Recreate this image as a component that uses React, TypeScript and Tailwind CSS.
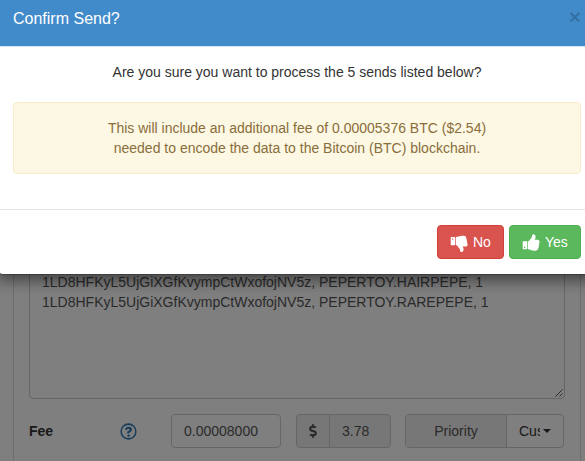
import React, { useState } from "react";
import { FaDollarSign } from "react-icons/fa";

const sends = [
  "1LD8HFKyL5UjGiXGfKvympCtWxofojNV5z, PEPERTOY.HAIRPEPE, 1",
  "1LD8HFKyL5UjGiXGfKvympCtWxofojNV5z, PEPERTOY.RAREPEPE, 1",
];

export default function App() {
  const [open, setOpen] = useState(true);

  return (
    <div className="relative h-[461px] w-[585px] overflow-hidden bg-white font-['Liberation_Sans',sans-serif] text-sm leading-5 text-[#333]">
      <SendForm />
      {open && <ConfirmModal onClose={() => setOpen(false)} />}
    </div>
  );
}

function SendForm() {
  const [fee, setFee] = useState("0.00008000");

  return (
    <div className="ml-[13px] flex h-[461px] w-[568px] flex-col border-x border-[#ddd] px-[15px]">
      <div className="mt-[200px] flex h-[199px] w-[536px] shrink-0 flex-col rounded border border-[#ccc] px-3 pt-[71px] text-[#555]">
        {sends.map((send) => (
          <div key={send} className="whitespace-nowrap">
            {send}
          </div>
        ))}
        <svg
          className="mt-auto -mr-3 self-end"
          width="9"
          height="9"
          viewBox="0 0 9 9"
          stroke="#555"
          fill="none"
        >
          <path d="M0.5 7.5L7.5 0.5M4.5 7.5L7.5 4.5" />
        </svg>
      </div>
      <div className="mt-[15px] flex h-[34px] w-[536px] items-center">
        <label className="w-[90px] font-bold">Fee</label>
        <div className="w-[52px]">
          <HelpIcon />
        </div>
        <input
          type="text"
          value={fee}
          onChange={(e) => setFee(e.target.value)}
          className="h-[34px] w-[110px] rounded border border-[#ccc] px-3 text-[#555] outline-none"
        />
        <div className="ml-[15px] flex h-[34px] w-[95px] overflow-hidden rounded border border-[#ccc] bg-[#eee]">
          <span className="flex w-[33px] items-center justify-center border-r border-[#ccc] text-[#555]">
            <FaDollarSign className="size-[14px]" />
          </span>
          <span className="px-3 leading-8 text-[#555]">3.78</span>
        </div>
        <div className="ml-[14px] flex h-[34px] w-[159px] overflow-hidden rounded border border-[#ccc]">
          <span className="w-[101px] border-r border-[#ccc] bg-[#eee] text-center leading-8 text-[#555]">
            Priority
          </span>
          <button className="flex flex-1 items-center pl-3 text-[#333]">
            <span className="w-[21px] overflow-hidden text-left">Custom</span>
            <span className="ml-[3px] border-x-4 border-t-4 border-x-transparent border-t-[#333]" />
          </button>
        </div>
      </div>
    </div>
  );
}

function ConfirmModal({ onClose }: { onClose: () => void }) {
  return (
    <div className="absolute inset-0 bg-black/50">
      <div className="-mt-2 -ml-[3px] h-[283px] w-[600px] rounded-md border border-black/20 bg-white bg-clip-padding pt-[7px] shadow-[0_5px_15px_rgba(0,0,0,0.5)]">
        <div className="flex h-[47px] justify-between border-b border-[#d9e8f5] bg-[#428bca] pt-2 pr-[15px] pl-[15px]">
          <h4 className="text-base leading-[22px] text-white">Confirm Send?</h4>
          <button
            onClick={onClose}
            className="mt-[-1px] h-5 text-[21px] leading-5 font-bold text-black/20"
          >
            ×
          </button>
        </div>
        <div className="h-[162px] px-[15px] pt-[15px] text-center">
          <p>Are you sure you want to process the 5 sends listed below?</p>
          <div className="mt-5 w-[568px] rounded border border-[#faebcc] bg-[#fcf8e3] p-[15px] text-[#8a6d3b]">
            This will include an additional fee of 0.00005376 BTC ($2.54)
            <br />
            needed to encode the data to the Bitcoin (BTC) blockchain.
          </div>
        </div>
        <div className="flex gap-[5px] border-t border-[#e5e5e5] pt-[15px] pl-[439px]">
          <button
            onClick={onClose}
            className="flex h-[34px] w-[67px] items-center gap-1 rounded border border-[#d43f3a] bg-[#d9534f] pl-3 text-white"
          >
            <ThumbIcon down />
            No
          </button>
          <button
            onClick={onClose}
            className="flex h-[34px] w-[72px] items-center gap-1 rounded border border-[#4cae4c] bg-[#5cb85c] pl-3 text-white"
          >
            <ThumbIcon />
            Yes
          </button>
        </div>
      </div>
    </div>
  );
}

function ThumbIcon({ down }: { down?: boolean }) {
  return (
    <svg
      className="size-[19px] shrink-0"
      viewBox="0 0 1792 1792"
      fill="currentColor"
    >
      <path
        transform={down ? "translate(0 1920) scale(1 -1)" : undefined}
        d="M320 1344q0-26-19-45t-45-19q-27 0-45.5 19t-18.5 45q0 27 18.5 45.5t45.5 18.5q26 0 45-18.5t19-45.5zm160-512v640q0 26-19 45t-45 19h-288q-26 0-45-19t-19-45v-640q0-26 19-45t45-19h288q26 0 45 19t19 45zm1184 0q0 86-55 149 15 44 15 76 3 76-43 137 17 56 0 117-15 57-54 94 9 112-49 181-64 76-197 78h-129q-66 0-144-15.5t-121.5-29-120.5-39.5q-123-43-158-44-26-1-45-19.5t-19-44.5v-641q0-25 18-43.5t43-20.5q24-2 76-59t101-121q68-87 101-120 18-18 31-48t17.5-48.5 13.5-60.5q7-39 12.5-61t19.5-52 34-50q19-19 45-19 46 0 82.5 10.5t60 26 40 40.5 24 45 12 50 5 45 .5 39q0 38-9.5 76t-19 60-27.5 56q-3 6-10 18t-11 22-8 24h277q78 0 135 57t57 135z"
      />
    </svg>
  );
}

function HelpIcon() {
  return (
    <svg
      className="size-[19px] text-[#337ab7]"
      viewBox="0 0 1792 1792"
      fill="currentColor"
    >
      <circle
        cx="896"
        cy="896"
        r="696"
        fill="none"
        stroke="currentColor"
        strokeWidth="144"
      />
      <path d="M1008 1356v-160q0-24-24-24h-160q-24 0-24 24v160q0 24 24 24h160q24 0 24-24zM1234 734q0-80-50-148t-125-105-153-37q-219 0-334 192-14 22 7 38l110 84q20 14 38-6 48-61 78-83 31-22 80-22 43 0 77 23.500t34 53.500q0 34-18 55t-61 40q-57 25-104 78t-47 113v33q0 28 28 28h166q28 0 28-28 0-18 20-45t49-45q29-16 44-26t42-32 40-43 25-55 11-73z" />
    </svg>
  );
}
